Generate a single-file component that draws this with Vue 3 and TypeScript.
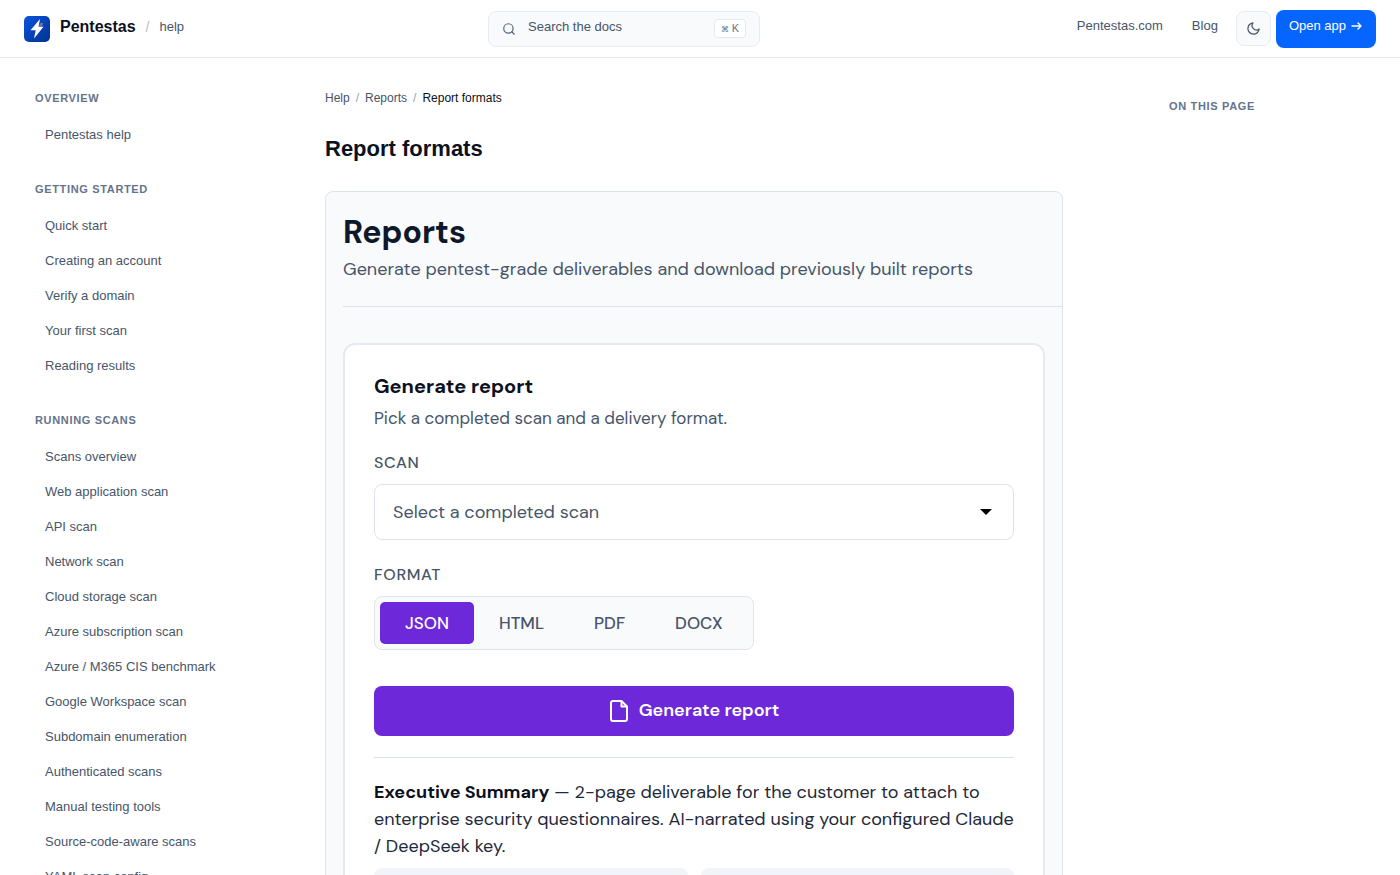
<script setup lang="ts">
import { ref } from 'vue'

interface NavSection {
  title: string
  items: string[]
}

const sections: NavSection[] = [
  { title: 'Overview', items: ['Pentestas help'] },
  {
    title: 'Getting started',
    items: ['Quick start', 'Creating an account', 'Verify a domain', 'Your first scan', 'Reading results'],
  },
  {
    title: 'Running scans',
    items: [
      'Scans overview',
      'Web application scan',
      'API scan',
      'Network scan',
      'Cloud storage scan',
      'Azure subscription scan',
      'Azure / M365 CIS benchmark',
      'Google Workspace scan',
      'Subdomain enumeration',
      'Authenticated scans',
      'Manual testing tools',
      'Source-code-aware scans',
      'YAML scan config',
    ],
  },
]

const formats: string[] = ['JSON', 'HTML', 'PDF', 'DOCX']
const format = ref<string>('JSON')
const scan = ref<string>('')
const query = ref<string>('')
</script>

<template>
  <div class="shell">
    <header class="topbar">
      <div class="brand">
        <a class="brand-link" href="#">
          <svg class="logo" viewBox="0 0 26 26" aria-hidden="true">
            <defs>
              <linearGradient id="logo-fill" x1="0" y1="0" x2="1" y2="1">
                <stop offset="0" stop-color="#0a55e0" />
                <stop offset="1" stop-color="#02318f" />
              </linearGradient>
            </defs>
            <rect width="26" height="26" rx="5" fill="url(#logo-fill)" />
            <path d="M16 3 6.500 14.200h5.200L10 22.500l9.500-11.700h-5z" fill="#fff" />
            <path d="m15.600 8.500 1.200-1.800 2.500.6-1.600 3.300-3-.2z" fill="#f4b183" opacity=".45" />
          </svg>
          <span class="brand-name">Pentestas</span>
        </a>
        <span class="brand-sep">/</span>
        <a class="brand-sub" href="#">help</a>
      </div>

      <label class="search">
        <svg class="search-icon" viewBox="0 0 24 24" aria-hidden="true">
          <circle cx="11" cy="11" r="8" />
          <path d="m21 21-4.300-4.300" />
        </svg>
        <input v-model="query" type="text" placeholder="Search the docs" aria-label="Search the docs" />
        <kbd><span class="cmd">⌘</span> K</kbd>
      </label>

      <nav class="actions" aria-label="Site">
        <a class="top-link" href="#">Pentestas.com</a>
        <a class="top-link" href="#">Blog</a>
        <button class="theme" type="button" aria-label="Toggle theme">
          <svg viewBox="0 0 24 24" aria-hidden="true">
            <path d="M21 12.800A9 9 0 1 1 11.200 3a7 7 0 0 0 9.800 9.800z" />
          </svg>
        </button>
        <a class="open-app" href="#">
          <span>Open app</span>
          <svg viewBox="0 0 12 12" aria-hidden="true"><path d="M1 6h9M7 3l3 3-3 3" /></svg>
        </a>
      </nav>
    </header>

    <div class="body">
      <aside class="sidebar">
        <nav v-for="section in sections" :key="section.title" class="nav-section" :aria-label="section.title">
          <h2 class="eyebrow">{{ section.title }}</h2>
          <ul>
            <li v-for="item in section.items" :key="item"><a href="#">{{ item }}</a></li>
          </ul>
        </nav>
      </aside>

      <main class="content">
        <nav class="crumbs" aria-label="Breadcrumb">
          <a href="#">Help</a><span class="slash">/</span><a href="#">Reports</a><span class="slash">/</span>
          <span class="current">Report formats</span>
        </nav>
        <h1>Report formats</h1>

        <section class="figure">
          <div class="figure-head">
            <h2>Reports</h2>
            <p>Generate pentest-grade deliverables and download previously built reports</p>
          </div>

          <div class="card">
            <h3>Generate report</h3>
            <p class="hint">Pick a completed scan and a delivery format.</p>

            <label class="field-label" for="scan">SCAN</label>
            <div class="select">
              <select id="scan" v-model="scan">
                <option value="">Select a completed scan</option>
              </select>
              <svg class="caret" viewBox="0 0 12 6" aria-hidden="true"><path d="M0 0h12L6 6z" /></svg>
            </div>

            <span id="format-label" class="field-label">FORMAT</span>
            <div class="segments" role="group" aria-labelledby="format-label">
              <button
                v-for="f in formats"
                :key="f"
                type="button"
                :class="{ active: f === format }"
                :aria-pressed="f === format"
                @click="format = f"
              >
                {{ f }}
              </button>
            </div>

            <button class="generate" type="button">
              <svg viewBox="0 0 20 24" aria-hidden="true">
                <path d="M12.500 2H4a2 2 0 0 0-2 2v16a2 2 0 0 0 2 2h12a2 2 0 0 0 2-2V7.500z" />
                <path d="M12.500 2v5.500H18" />
              </svg>
              <span>Generate report</span>
            </button>

            <p class="summary">
              <strong>Executive Summary</strong> — 2-page deliverable for the customer to attach to enterprise
              security questionnaires. AI-narrated using your configured Claude / DeepSeek key.
            </p>
            <div class="tiles">
              <div class="tile"></div>
              <div class="tile"></div>
            </div>
          </div>
        </section>
      </main>

      <aside class="toc">
        <h2 class="eyebrow">On this page</h2>
      </aside>
    </div>
  </div>
</template>

<style>
body {
  margin: 0;
  background: #fff;
}
</style>

<style scoped>
.shell {
  height: 100vh;
  display: flex;
  flex-direction: column;
  overflow: hidden;
  color: #475569;
  font-family: "Liberation Sans", Arial, sans-serif;
  font-size: 13px;
}
.shell *,
.shell *::before {
  box-sizing: border-box;
}
a {
  color: inherit;
  text-decoration: none;
}
h1,
h2,
h3,
p,
ul {
  margin: 0;
  padding: 0;
}
ul {
  list-style: none;
}
button,
input,
select {
  font: inherit;
  color: inherit;
}
svg {
  display: block;
  flex: none;
}

.topbar {
  display: grid;
  grid-template-columns: minmax(0, 464px) 272px 1fr;
  align-items: center;
  height: 58px;
  flex: none;
  padding: 0 24px;
  border-bottom: 1px solid #e8eaee;
}
.brand,
.brand-link {
  display: flex;
  align-items: center;
}
.brand-link {
  gap: 10px;
}
.logo {
  width: 26px;
  height: 26px;
}
.brand-name {
  color: #0b1120;
  font-size: 16px;
  font-weight: 700;
  line-height: 22px;
  padding-bottom: 3px;
}
.brand-sep {
  color: #b6bec9;
  font-size: 14px;
  margin: 0 10px;
  padding-bottom: 3px;
}
.brand-sub {
  padding-bottom: 4px;
}
.search {
  display: flex;
  align-items: center;
  height: 36px;
  padding: 0 13px;
  background: #f8fafc;
  border: 1px solid #e8ebf0;
  border-radius: 8px;
}
.search-icon {
  width: 14px;
  height: 14px;
  margin-right: 12px;
  fill: none;
  stroke: #56637a;
  stroke-width: 2;
  stroke-linecap: round;
}
.search input {
  flex: 1;
  min-width: 0;
  padding: 0 0 4px;
  border: 0;
  background: none;
  outline: none;
}
.search input::placeholder {
  color: #475569;
  opacity: 1;
}
kbd {
  height: 19px;
  padding: 0 6px;
  background: #fff;
  border: 1px solid #e5e8ed;
  border-radius: 4px;
  color: #64748b;
  font-family: "Liberation Sans", Arial, sans-serif;
  font-size: 11px;
  line-height: 17px;
}
.cmd {
  font-size: 8px;
}
.actions {
  display: flex;
  align-items: center;
  justify-content: flex-end;
}
.top-link {
  margin-right: 29px;
  padding-bottom: 6px;
}
.top-link + .top-link {
  margin-right: 18px;
}
.theme {
  display: grid;
  place-items: center;
  width: 35px;
  height: 35px;
  padding: 0;
  background: #f8fafc;
  border: 1px solid #e8ebf0;
  border-radius: 8px;
}
.theme svg {
  width: 15px;
  height: 15px;
  fill: none;
  stroke: #475569;
  stroke-width: 2;
  stroke-linejoin: round;
}
.open-app {
  display: flex;
  align-items: center;
  gap: 5px;
  height: 38px;
  margin-left: 5px;
  padding: 0 13px 6px;
  background: #0664ff;
  border-radius: 8px;
  color: #fff;
}
.open-app svg {
  width: 12px;
  height: 12px;
  fill: none;
  stroke: #fff;
  stroke-width: 1.4;
  stroke-linecap: round;
  stroke-linejoin: round;
}

.body {
  flex: 1;
  min-height: 0;
  display: grid;
  grid-template-columns: 325px minmax(0, 1fr) 337px;
  overflow: hidden;
}
.sidebar {
  padding: 31px 35px 0;
}
.nav-section {
  margin-bottom: 28px;
}
.eyebrow {
  color: #64748b;
  font-size: 11px;
  font-weight: 700;
  letter-spacing: 0.06em;
  line-height: 18px;
  text-transform: uppercase;
}
.nav-section ul {
  padding-top: 10px;
}
.nav-section li a {
  display: block;
  padding: 0 10px;
  line-height: 35px;
  white-space: nowrap;
}
.toc {
  padding: 39px 24px 0 106px;
}

.crumbs {
  display: flex;
  padding-top: 31px;
  font-size: 12px;
  line-height: 18px;
}
.slash {
  margin: 0 6px;
  color: #94a3b8;
}
.current {
  color: #0b1120;
}
h1 {
  margin: 26px 0;
  color: #0b1120;
  font-size: 22px;
  line-height: 32px;
}

.figure {
  padding: 18px 17px 40px;
  background: #f8fafc;
  border: 1px solid #dde3ec;
  border-radius: 8px;
  font-family: "DM Sans", Lato, sans-serif;
}
.figure-head {
  margin-right: -17px;
  padding-bottom: 23px;
  border-bottom: 1px solid #dde3ec;
}
.figure-head h2 {
  color: #0f172a;
  font-size: 32px;
  line-height: 44px;
}
.figure-head p {
  margin-top: 1px;
  font-size: 18px;
  line-height: 28px;
  white-space: nowrap;
}
.card {
  margin-top: 36px;
  padding: 27px 29px 30px;
  background: #fff;
  border: 2px solid #e5eaf1;
  border-radius: 12px;
}
h3 {
  color: #0b1120;
  font-size: 20px;
  font-weight: 700;
  line-height: 28px;
}
.hint {
  margin-top: 4px;
  font-size: 17px;
  line-height: 28px;
}
.field-label {
  display: block;
  margin-top: 19px;
  font-size: 16px;
  font-weight: 500;
  letter-spacing: 0.04em;
  line-height: 24px;
}
.select {
  display: grid;
  align-items: center;
  margin: 9px 0 23px;
}
.select > * {
  grid-area: 1 / 1;
}
.select select {
  width: 100%;
  height: 56px;
  padding: 0 18px;
  appearance: none;
  background: #fff;
  border: 1px solid #dfe4ec;
  border-radius: 8px;
  font-size: 18px;
}
.caret {
  width: 12px;
  height: 6px;
  justify-self: end;
  margin-right: 22px;
  fill: #000;
  pointer-events: none;
}
.segments {
  display: flex;
  width: fit-content;
  margin-top: 9px;
  padding: 5px;
  background: #f8fafc;
  border: 1px solid #dfe4ec;
  border-radius: 8px;
}
.segments button {
  height: 42px;
  padding: 0 25px;
  background: none;
  border: 0;
  border-radius: 5px;
  font-size: 17px;
  font-weight: 500;
}
.segments .active {
  background: #6d28d9;
  color: #fff;
}
.generate {
  display: flex;
  align-items: center;
  justify-content: center;
  gap: 10px;
  width: 100%;
  height: 50px;
  margin: 36px 0 21px;
  background: #6d28d9;
  border: 0;
  border-radius: 8px;
  color: #fff;
  font-size: 18px;
  font-weight: 600;
}
.generate span {
  padding-bottom: 2px;
}
.generate svg {
  width: 20px;
  height: 24px;
  fill: none;
  stroke: #fff;
  stroke-width: 2;
  stroke-linejoin: round;
}
.summary {
  padding-top: 21px;
  border-top: 1px solid #dde3ec;
  color: #1e293b;
  font-size: 18px;
  line-height: 27px;
}
.summary strong {
  color: #0b1120;
}
.tiles {
  display: grid;
  grid-template-columns: 1fr 1fr;
  gap: 13px;
  margin-top: 8px;
}
.tile {
  height: 90px;
  background: #f1f4f9;
  border-radius: 8px;
}
</style>
